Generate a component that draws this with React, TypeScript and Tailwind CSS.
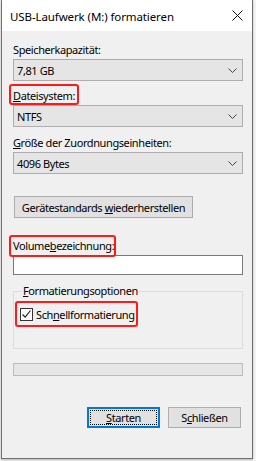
import React from "react";

const font = { fontFamily: '"Noto Sans", "Segoe UI", sans-serif' };

function Chevron() {
  return (
    <svg width="9" height="5" viewBox="0 0 9 5" className="shrink-0">
      <path d="M0.5 0.5 L4.5 4.5 L8.5 0.5" fill="none" stroke="#444" strokeWidth="1" />
    </svg>
  );
}

function Combo({ value }: { value: string }) {
  return (
    <div className="w-[230px] h-[22px] bg-[#e5e5e5] border border-[#adadad] flex items-center justify-between pl-[3px] pr-[5px]">
      <span className="leading-[15px] text-black">{value}</span>
      <Chevron />
    </div>
  );
}

function RedBox({ className }: { className: string }) {
  return <div className={"absolute border-[2.5px] border-[#ff1a1a] rounded-[3px] pointer-events-none " + className} />;
}

export default function App() {
  return (
    <div className="w-[256px] h-[461px] bg-[#f4f4f4] pl-[1px] overflow-hidden whitespace-nowrap" style={font}>
      <div className="relative w-[252px] h-[459px] border-l border-r border-b border-[#6f6f6f] bg-[#f0f0f0] shadow-[0_1px_2px_rgba(0,0,0,0.25)]">
        {/* title bar */}
        <div className="h-[31px] bg-white flex items-center justify-between pl-[8px] pr-[9px]">
          <span className="text-[11.5px] tracking-[-0.1px] text-black leading-[15px] mt-[1px]">USB-Laufwerk (M:) formatieren</span>
          <svg width="11" height="11" viewBox="0 0 11 11">
            <path d="M0.5 0.5 L10.5 10.5 M10.5 0.5 L0.5 10.5" stroke="#111" strokeWidth="1" />
          </svg>
        </div>
        {/* body */}
        <div className="pl-[11px] pt-[11px] text-[11px] tracking-[-0.4px] leading-[15px] text-black">
          <div className="h-[17px]">Speicherkapazität:</div>
          <Combo value="7,81 GB" />
          <div className="relative mt-[7px] h-[17px]">
            <span><span className="underline">D</span>ateisystem:</span>
            <RedBox className="left-[-4px] top-[-4px] w-[70px] h-[21px]" />
          </div>
          <Combo value="NTFS" />
          <div className="mt-[8px] h-[17px]">
            <span className="underline">G</span>röße der Zuordnungseinheiten:
          </div>
          <Combo value="4096 Bytes" />
          <div className="mt-[22px] ml-[1px] w-[179px] h-[22px] bg-[#e1e1e1] border border-[#adadad] flex items-center justify-center">
            <span>Gerätestandards <span className="underline">w</span>iederherstellen</span>
          </div>
          <div className="relative mt-[20px] h-[17px]">
            <span>Volume<span className="underline">b</span>ezeichnung:</span>
            <RedBox className="left-[-4px] top-[-3px] w-[107px] h-[22px]" />
          </div>
          <div className="w-[230px] h-[20px] bg-white border border-[#7a7a7a]" />
          {/* group box */}
          <div className="relative mt-[16px] w-[230px] h-[58px] border border-[#dcdcdc]">
            <div className="absolute left-[8px] top-[-9px] px-[1px] bg-[#f0f0f0] leading-[16px]">
              <span className="underline">F</span>ormatierungsoptionen
            </div>
            <div className="relative mt-[15px] ml-[6px] flex items-center gap-[3px]">
              <div className="w-[13px] h-[13px] bg-white border border-[#333] flex items-center justify-center">
                <svg width="11" height="11" viewBox="0 0 11 11">
                  <path d="M1.5 5.5 L4.2 8.2 L9.5 1.5" fill="none" stroke="#222" strokeWidth="1.2" />
                </svg>
              </div>
              <span>Sch<span className="underline">n</span>ellformatierung</span>
              <RedBox className="left-[-5px] top-[-6px] w-[123px] h-[26px]" />
            </div>
          </div>
          {/* progress */}
          <div className="mt-[14px] w-[230px] h-[13px] bg-[#e6e6e6] border border-[#bcbcbc]" />
          {/* buttons */}
          <div className="mt-[31px] flex pl-[74px] gap-[8px]">
            <div className="w-[73px] h-[21px] border-2 border-[#0078d7] bg-[#e1e1e1] p-[1px]">
              <div className="w-full h-full border border-dotted border-black flex items-center justify-center">
                <span><span className="underline">S</span>tarten</span>
              </div>
            </div>
            <div className="w-[73px] h-[21px] border border-[#adadad] bg-[#e1e1e1] flex items-center justify-center">
              <span>S<span className="underline">c</span>hließen</span>
            </div>
          </div>
        </div>
      </div>
    </div>
  );
}
